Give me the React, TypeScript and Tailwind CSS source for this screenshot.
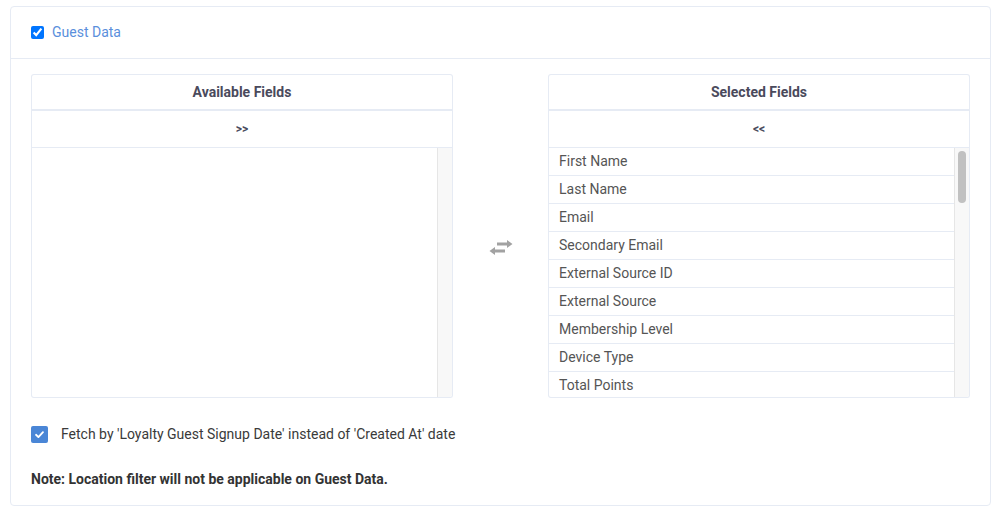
const selectedFields: string[] = [
  "First Name",
  "Last Name",
  "Email",
  "Secondary Email",
  "External Source ID",
  "External Source",
  "Membership Level",
  "Device Type",
  "Total Points",
];

const Scrollbar = ({ thumb }: { thumb?: boolean }) => (
  <div className="w-[15px] shrink-0 border-l border-[#e6e6e6] bg-[#f8f8f8] pt-[3px]">
    {thumb && (
      <div className="mx-auto h-[52px] w-[8px] rounded-full bg-[#c1c1c1]" />
    )}
  </div>
);

// two offset arrows, right on top and left underneath
const SwapIcon = () => (
  <svg viewBox="0 0 24 16" className="h-[16px] w-[24px]">
    <path d="M8 2.5h10V0l5.5 4L18 8V5.5H8z" fill="#a2a2a2" />
    <path d="M16 9.5H6V7L0.5 11 6 15v-2.5h10z" fill="#a2a2a2" />
  </svg>
);

const FieldPanel = ({
  title,
  action,
  items,
}: {
  title: string;
  action: string;
  items: string[];
}) => (
  <div className="flex w-[422px] flex-col">
    <div className="flex h-[37px] items-center justify-center rounded-t-[3px] border border-b-2 border-[#e6ebf4] text-[14px] font-bold text-[#4a4a5c]">
      {title}
    </div>
    <div className="flex h-[37px] items-center justify-center border-x border-b border-[#e6ebf4] text-[12px] font-bold text-[#4a4a5c]">
      {action}
    </div>
    <div className="flex h-[250px] overflow-hidden rounded-b-[3px] border-x border-b border-[#e6ebf4]">
      <ul className="flex-1">
        {items.map((item) => (
          <li
            key={item}
            className="flex h-[28px] items-center border-b border-[#e6ebf4] pl-[10px] text-[14px] text-[#555]"
          >
            {item}
          </li>
        ))}
      </ul>
      <Scrollbar thumb={items.length > 0} />
    </div>
  </div>
);

export default function App() {
  return (
    <div
      className="pl-[10px] pt-[6px]"
      style={{ fontFamily: "Roboto, 'Liberation Sans', sans-serif" }}
    >
      <div className="w-[981px] rounded-[4px] border border-[#e6ebf4] bg-white">
        <div className="flex h-[52px] items-center gap-[8px] border-b border-[#e6ebf4] pl-[20px]">
          <input
            type="checkbox"
            checked
            readOnly
            className="m-0 h-[13px] w-[13px]"
          />
          <span className="text-[14px] text-[#5a8fdc]">Guest Data</span>
        </div>

        <div className="px-[20px] pt-[15px] pb-[15px]">
          <div className="flex">
            <FieldPanel title="Available Fields" action=">>" items={[]} />
            <div className="flex w-[95px] justify-center pt-[166px]">
              <SwapIcon />
            </div>
            <FieldPanel
              title="Selected Fields"
              action="<<"
              items={selectedFields}
            />
          </div>

          <label className="mt-[26px] flex items-center gap-[13px]">
            <span className="flex h-[17px] w-[17px] items-center justify-center rounded-[2px] bg-[#4a86d6]">
              <svg viewBox="0 0 12 12" className="h-[11px] w-[11px]">
                <path
                  d="M2.2 6.3 4.8 8.8 9.8 3.4"
                  fill="none"
                  stroke="white"
                  strokeWidth="2"
                  strokeLinecap="round"
                  strokeLinejoin="round"
                />
              </svg>
            </span>
            <span className="text-[14px] text-[#3a3a3a]">
              Fetch by 'Loyalty Guest Signup Date' instead of 'Created At' date
            </span>
          </label>

          <p className="mt-[24px] text-[14px] font-bold text-[#333]">
            Note: Location filter will not be applicable on Guest Data.
          </p>
        </div>
      </div>
    </div>
  );
}
